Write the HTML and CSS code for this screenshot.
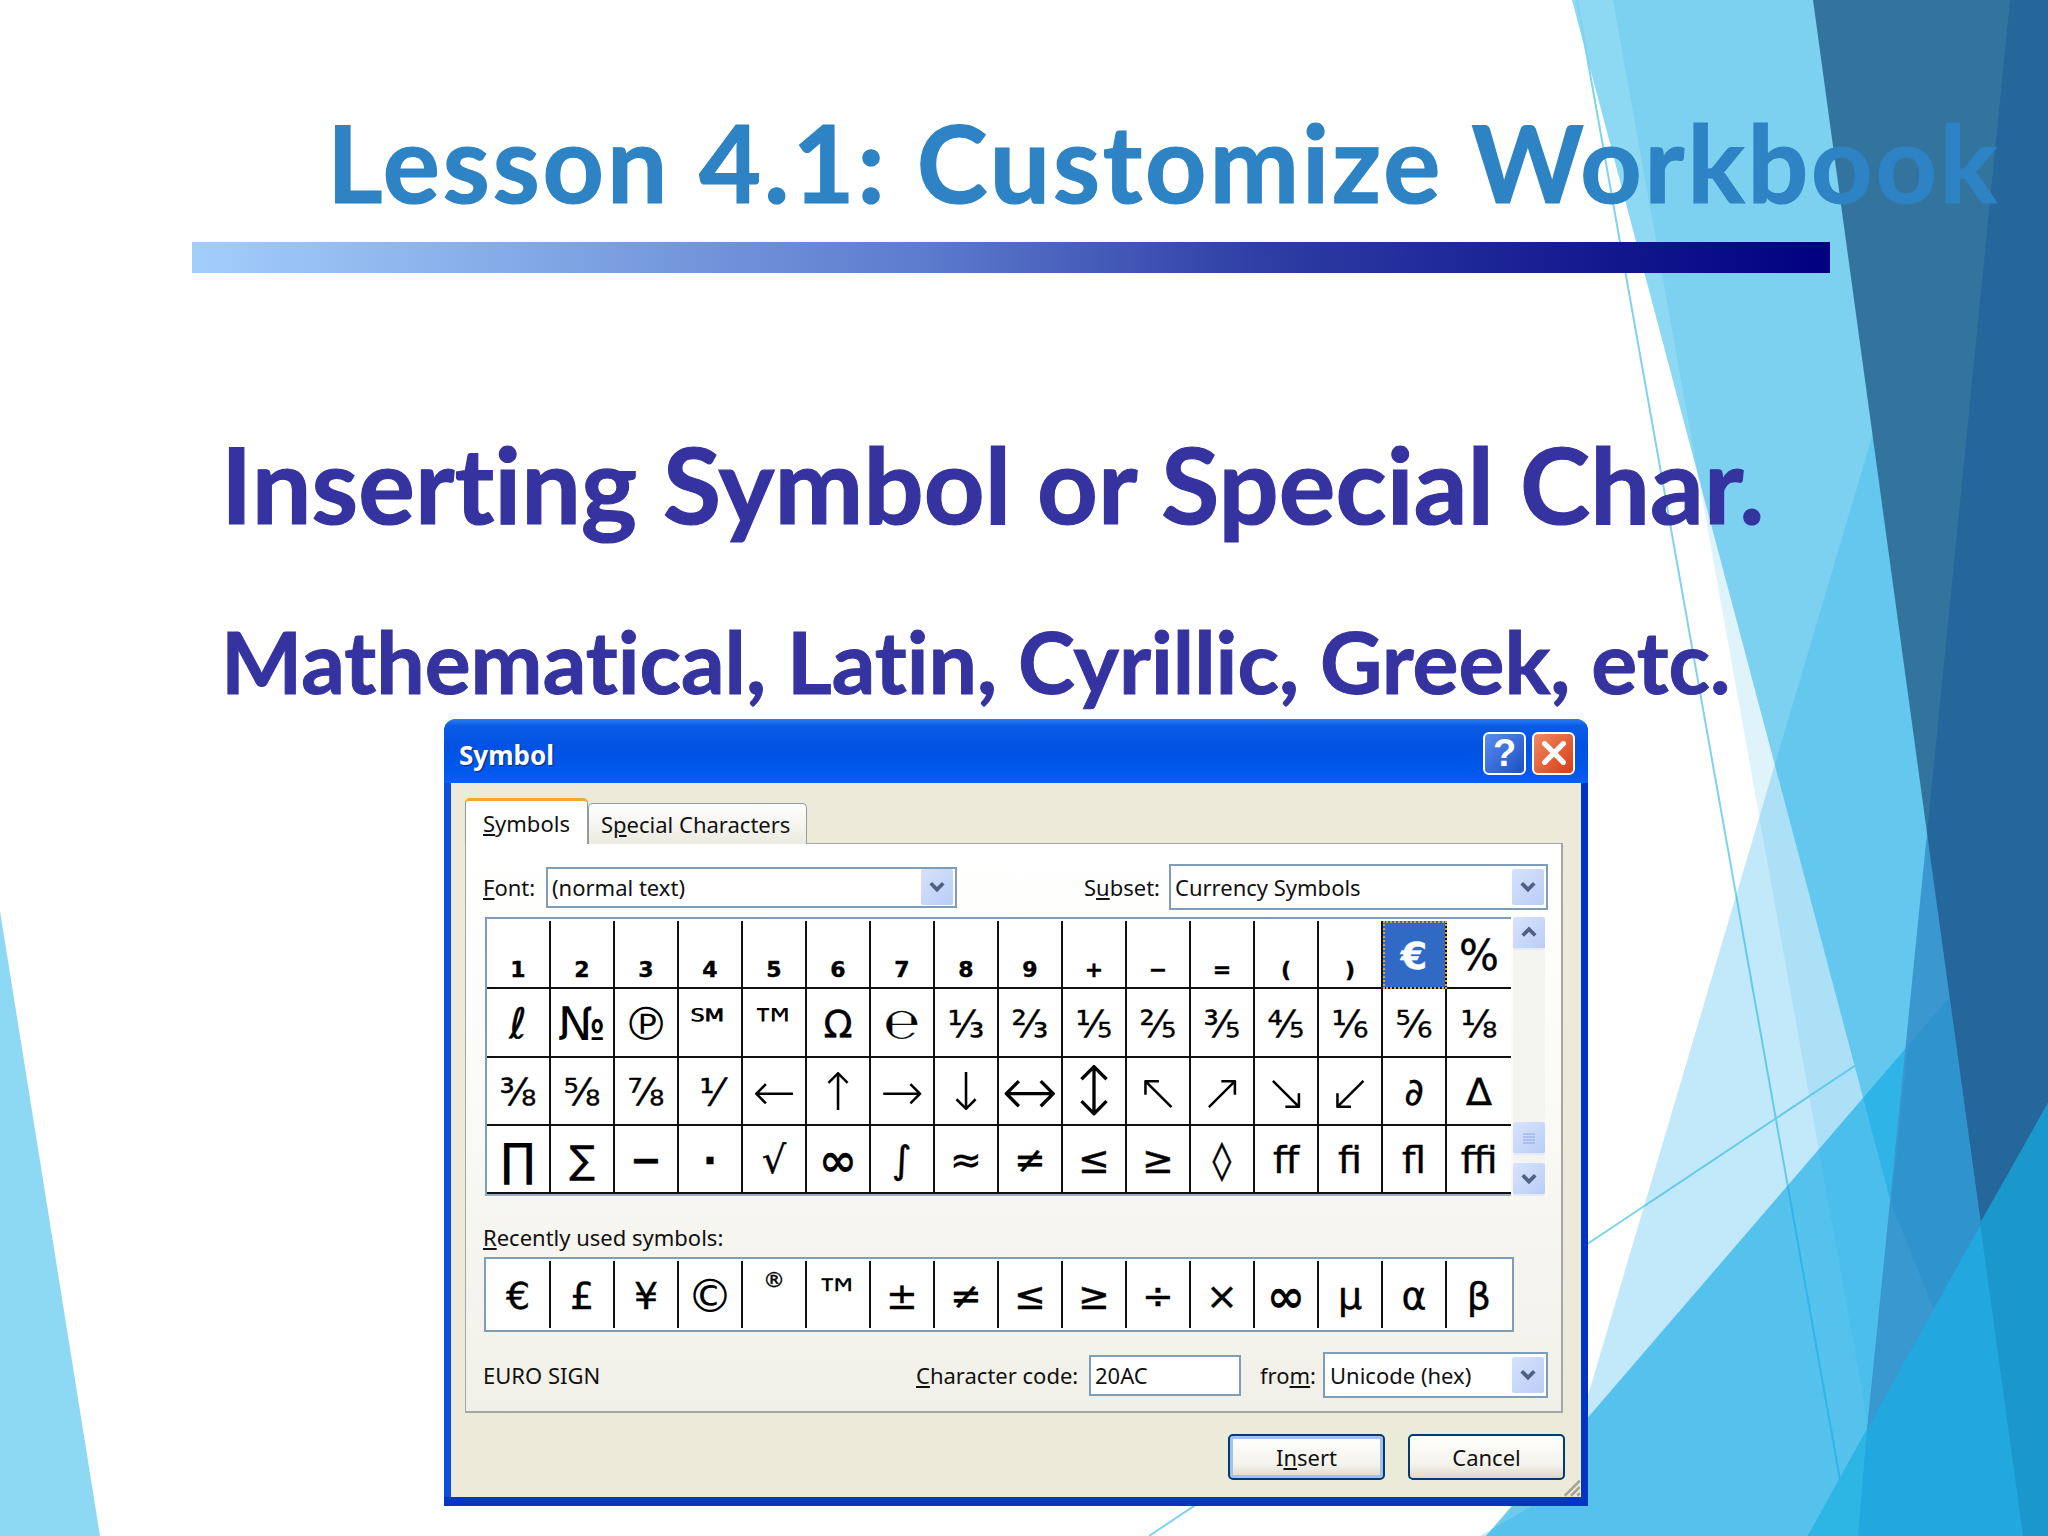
FILE: index.html
```html
<!DOCTYPE html>
<html lang="en">
<head>
<meta charset="utf-8">
<title>Lesson 4.1: Customize Workbook</title>
<link rel="stylesheet" href="styles.css">
</head>
<body>
<div class="slide">
  <svg class="bg" viewBox="0 0 2048 1536" width="2048" height="1536" aria-hidden="true">
    <polygon points="0,911 100,1536 0,1536" fill="#8dd9f3"/>
    <polygon points="1572,0 2048,0 2048,1203 1891,1203" fill="#8dd8f3"/>
    <polygon points="1613,0 2048,0 2048,1536 1888,1536" fill="#1fabe3" fill-opacity="0.143"/>
    <line x1="1577" y1="0" x2="1850" y2="1536" stroke="#7fd3ee" stroke-width="2"/>
    <line x1="1907" y1="1031" x2="1149" y2="1536" stroke="#7fd3ee" stroke-width="2"/>
    <polygon points="1900,342 2048,342 2048,1536 1480,1536 1560,1490" fill="#25b1e9" fill-opacity="0.28"/>
    <polygon points="1949,998 1486,1536 1880,1536" fill="#0ca6e5" fill-opacity="0.6"/>
    <polygon points="1813,0 2020,0 1940,833 1927,833" fill="#33749f"/>
    <polygon points="2010,0 2048,0 2048,1200 1990,1290 1940,1000 1927,833" fill="#25679b"/>
    <polygon points="1927,833 1990,1290 1860,1500" fill="#3a97cf"/>
    <polygon points="1949,998 1990,1290 1860,1500 1908,1046" fill="#2f93ce"/>
    <polygon points="1891,1203 1950,1350 1860,1500" fill="#3a98d0"/>
    <polygon points="2048,1103 2048,1536 1808,1536" fill="#22a8de"/>
    <polygon points="1980,1223 2048,1103 2048,1536 2023,1536" fill="#1a98cc"/>
    <polygon points="1867,1429 1858,1536 1808,1536" fill="#2db5e4"/>
  </svg>

  <h1 class="title">Lesson 4.1: Customize Workbook</h1>
  <div class="rule"></div>
  <h2 class="head">Inserting Symbol or Special Char.</h2>
  <h3 class="sub-head">Mathematical, Latin, Cyrillic, Greek, etc.</h3>

  <div class="dialog">
    <div class="titlebar">
      <span class="dlg-title">Symbol</span>
      <div class="caption-btns">
        <span class="cap-btn help">?</span>
        <span class="cap-btn close">
          <svg viewBox="0 0 24 24" width="28" height="28"><path d="M4 4 L20 20 M20 4 L4 20" stroke="#fff" stroke-width="4.5" stroke-linecap="round" fill="none"/></svg>
        </span>
      </div>
    </div>
    <div class="body">
      <div class="tabs">
        <span class="tab active"><u>S</u>ymbols</span>
        <span class="tab">S<u>p</u>ecial Characters</span>
      </div>
      <div class="panel">
        <div class="font-row">
          <label class="lbl font-lbl"><u>F</u>ont:</label>
          <div class="select font-sel"><span>(normal text)</span>
            <span class="arrow"><svg viewBox="0 0 16 16" width="20" height="20"><path d="M3 5 L8 10 L13 5" class="chev"/></svg></span>
          </div>
          <label class="lbl subset-lbl">S<u>u</u>bset:</label>
          <div class="select subset-sel"><span>Currency Symbols</span>
            <span class="arrow"><svg viewBox="0 0 16 16" width="20" height="20"><path d="M3 5 L8 10 L13 5" class="chev"/></svg></span>
          </div>
        </div>
        <div class="grid-row">
          <div class="grid">
            <span class="c s">1</span><span class="c s">2</span><span class="c s">3</span><span class="c s">4</span><span class="c s">5</span><span class="c s">6</span><span class="c s">7</span><span class="c s">8</span><span class="c s">9</span><span class="c s">+</span><span class="c s">−</span><span class="c s">=</span><span class="c s">(</span><span class="c s">)</span><span class="c sel">€</span><span class="c big">%</span>
            <span class="c big">ℓ</span><span class="c w">№</span><span class="c w">℗</span><span class="c tm">℠</span><span class="c tm">™</span><span class="c">Ω</span><span class="c big">℮</span><span class="c">⅓</span><span class="c">⅔</span><span class="c">⅕</span><span class="c">⅖</span><span class="c">⅗</span><span class="c">⅘</span><span class="c">⅙</span><span class="c">⅚</span><span class="c">⅛</span>
            <span class="c">⅜</span><span class="c">⅝</span><span class="c">⅞</span><span class="c">⅟</span><span class="c ar">←</span><span class="c ar">↑</span><span class="c ar">→</span><span class="c ar">↓</span><span class="c ar2">↔</span><span class="c ar2">↕</span><span class="c ar">↖</span><span class="c ar">↗</span><span class="c ar">↘</span><span class="c ar">↙</span><span class="c">∂</span><span class="c">∆</span>
            <span class="c w">∏</span><span class="c">∑</span><span class="c b">−</span><span class="c b">·</span><span class="c">√</span><span class="c b w">∞</span><span class="c">∫</span><span class="c">≈</span><span class="c">≠</span><span class="c">≤</span><span class="c">≥</span><span class="c">◊</span><span class="c">ﬀ</span><span class="c">ﬁ</span><span class="c">ﬂ</span><span class="c">ﬃ</span>
          </div>
          <div class="scroll">
            <span class="sb-btn"><svg viewBox="0 0 16 16" width="20" height="20"><path d="M3 10 L8 5 L13 10" class="chev"/></svg></span>
            <span class="sb-track"></span>
            <span class="sb-thumb"><svg viewBox="0 0 16 16" width="16" height="16"><path d="M2 4 H14 M2 7 H14 M2 10 H14 M2 13 H14" stroke="#8ea6e8" stroke-width="1.2"/></svg></span>
            <span class="sb-btn"><svg viewBox="0 0 16 16" width="20" height="20"><path d="M3 5 L8 10 L13 5" class="chev"/></svg></span>
          </div>
        </div>
        <div class="lbl recent-lbl"><u>R</u>ecently used symbols:</div>
        <div class="recent">
          <span class="r">€</span><span class="r">£</span><span class="r">¥</span><span class="r w">©</span><span class="r reg">®</span><span class="r tm">™</span><span class="r">±</span><span class="r">≠</span><span class="r">≤</span><span class="r">≥</span><span class="r">÷</span><span class="r">×</span><span class="r b w">∞</span><span class="r">µ</span><span class="r">α</span><span class="r">β</span>
        </div>
        <div class="code-row">
          <span class="lbl euro">EURO SIGN</span>
          <label class="lbl code-lbl"><u>C</u>haracter code:</label>
          <div class="input">20AC</div>
          <label class="lbl from-lbl">fro<u>m</u>:</label>
          <div class="select from-sel"><span>Unicode (hex)</span>
            <span class="arrow"><svg viewBox="0 0 16 16" width="20" height="20"><path d="M3 5 L8 10 L13 5" class="chev"/></svg></span>
          </div>
        </div>
      </div>
      <div class="actions">
        <span class="btn default">I<u>n</u>sert</span>
        <span class="btn">Cancel</span>
      </div>
      <svg class="grip" viewBox="0 0 16 16" width="20" height="20" aria-hidden="true"><path d="M15 3 L3 15 M15 8 L8 15 M15 13 L13 15" stroke="#a8a596" stroke-width="2"/></svg>
    </div>
  </div>
</div>
</body>
</html>
```
FILE: styles.css
```css
* { box-sizing: border-box; }
html, body { margin: 0; padding: 0; background: #fff; }
.slide {
  position: relative;
  width: 2048px;
  height: 1536px;
  overflow: hidden;
  background: #fff;
  font-family: "Lato", "Open Sans", sans-serif;
  font-variant-ligatures: none;
}
.bg { position: absolute; left: 0; top: 0; }
.title, .head, .sub-head, .rule, .dialog { position: relative; }
.title {
  margin: 0 0 0 327px;
  padding-top: 102px;
  font-size: 107px;
  line-height: 120px;
  font-weight: 700;
  letter-spacing: 2.9px;
  -webkit-text-stroke-width: 1.2px;
  color: #2d83c4;
  white-space: nowrap;
}
.rule {
  margin: 20px 0 0 192px;
  width: 1638px;
  height: 31px;
  background: linear-gradient(90deg, #a3cefb 0%, #5c7bcd 45%, #2f3ea5 65%, #000080 100%);
}
.head {
  margin: 150px 0 0 221px;
  font-size: 106px;
  line-height: 120px;
  font-weight: 700;
  letter-spacing: 0.1px;
  -webkit-text-stroke-width: 1.2px;
  color: #35339f;
  white-space: nowrap;
}
.sub-head {
  margin: 68px 0 0 221px;
  font-size: 86px;
  line-height: 100px;
  font-weight: 700;
  -webkit-text-stroke-width: 1px;
  color: #35339f;
  white-space: nowrap;
}

/* dialog */
.dialog {
  position: absolute;
  left: 444px;
  top: 719px;
  width: 1144px;
  height: 787px;
  border-radius: 12px 12px 0 0;
  background: linear-gradient(90deg, #0a52dc 0%, #0a52dc 90%, #0033c4 100%);
  font-family: "Noto Sans", "DejaVu Sans", sans-serif;
  color: #111;
  box-shadow: inset 0 -9px 0 #0036c2;
}
.titlebar {
  height: 64px;
  display: flex;
  align-items: center;
  justify-content: space-between;
  padding: 4px 13px 0 15px;
  border-radius: 12px 12px 0 0;
  background: linear-gradient(180deg, #2a7ff0 0%, #0a5ce6 10%, #0053e2 45%, #0058ee 85%, #0a60f0 100%);
}
.dlg-title {
  padding-top: 4px;
  color: #fff;
  font-size: 26px;
  font-weight: 700;
  text-shadow: 1px 1px 1px #0a2a80;
}
.caption-btns { display: flex; gap: 6px; }
.cap-btn {
  width: 43px;
  height: 43px;
  border: 2px solid #fff;
  border-radius: 6px;
  display: flex;
  align-items: center;
  justify-content: center;
  color: #fff;
  font-size: 38px;
  font-weight: 700;
  line-height: 1;
  font-family: "Liberation Sans", sans-serif;
}
.help { background: linear-gradient(135deg, #5a8cf0, #1c4fc4); }
.close { background: linear-gradient(135deg, #ef8a64, #d83c12); }
.body {
  position: relative;
  margin: 0 7px 0 7px;
  height: 714px;
  background: #ecebd9;
  padding: 15px 0 0 14px;
  font-size: 22px;
}
.tabs { display: flex; align-items: flex-end; height: 46px; }
.tab {
  height: 41px;
  padding: 0 12px;
  width: 219px;
  display: flex;
  align-items: center;
  background: linear-gradient(180deg, #fff, #ecebe0);
  border: 1px solid #919b9c;
  border-bottom: 0;
  border-radius: 5px 5px 0 0;
  white-space: nowrap;
}
.tab.active {
  width: 123px;
  height: 46px;
  padding: 0 0 0 17px;
  background: #fff;
  border-top: 3px solid #f2a832;
  position: relative;
  z-index: 1;
}
.panel {
  width: 1098px;
  height: 570px;
  margin-top: -1px;
  border: 2px solid #a4a7a2;
  border-top-width: 1px;
  border-left-width: 1px;
  background: linear-gradient(180deg, #fff 0%, #fbfbf8 40%, #f1f0e8 100%);
  padding: 20px 0 0 17px;
}
.lbl { white-space: nowrap; }
.font-row { display: flex; align-items: center; height: 46px; }
.font-lbl { width: 63px; }
.select {
  display: flex;
  align-items: center;
  justify-content: space-between;
  background: #fff;
  border: 2px solid #7f9db9;
  padding: 0 2px 0 4px;
}
.font-sel { width: 411px; height: 41px; }
.subset-lbl { margin-left: 127px; width: 85px; }
.subset-sel { width: 379px; height: 46px; }
.arrow {
  width: 32px;
  height: 36px;
  background: linear-gradient(135deg, #d6e2fb, #b9cdf6);
  border-radius: 2px;
  display: flex;
  align-items: center;
  justify-content: center;
}
.chev { fill: none; stroke: #4d6185; stroke-width: 3; }
.grid-row { display: flex; margin-top: 7px; margin-left: 1px; gap: 2px; }
.grid {
  width: 1026px;
  height: 279px;
  margin-left: 1px;
  background: #fff;
  border-left: 2px solid #7f9db9;
  border-top: 2px solid #7f9db9;
  border-bottom: 2px solid #9bb0c6;
  padding-top: 2px;
  display: grid;
  grid-template-columns: repeat(16, 64px);
  grid-template-rows: repeat(4, 1fr);
  color: #000;
}
.c {
  display: flex;
  align-items: center;
  justify-content: center;
  min-width: 0;
  min-height: 0;
  font-family: "DejaVu Sans", sans-serif;
  font-size: 38px;
  line-height: 1;
  padding-top: 3px;
  -webkit-text-stroke-width: 0.4px;
  border-right: 2px solid #111;
  border-bottom: 2px solid #111;
}
.c:nth-child(16n) { border-right: 0; }
.c.s {
  align-items: flex-end;
  padding-top: 0;
  font-size: 22px;
  font-weight: 700;
  padding-bottom: 6px;
}
.c.sel {
  background: #316ac5;
  color: #fff;
  font-weight: 700;
  outline: 2px dotted #d8a530;
  outline-offset: -2px;
}
.c.big { font-size: 42px; }
.c.w, .r.w { font-size: 46px; -webkit-text-stroke-width: 0; }
.c.tm { font-size: 48px; padding-top: 8px; -webkit-text-stroke-width: 0; }
.c.ar, .c.ar2 { font-weight: 200; -webkit-text-stroke-width: 0; }
.c.ar { font-size: 52px; }
.c.ar2 { font-size: 68px; }
.c.b, .r.b { font-weight: 700; }
.scroll {
  width: 32px;
  height: 279px;
  display: flex;
  flex-direction: column;
  background: #f4f4f0;
}
.sb-btn, .sb-thumb {
  height: 33px;
  background: linear-gradient(135deg, #d8e4fb, #b9cdf6);
  border-bottom: 2px solid #e2eafb;
  border-radius: 3px;
  display: flex;
  align-items: center;
  justify-content: center;
}
.sb-track { flex: 1; }
.sb-thumb { margin-bottom: 8px; }
.recent-lbl { margin-top: 26px; height: 30px; line-height: 30px; }
.recent {
  margin: 5px 0 0 1px;
  width: 1030px;
  height: 75px;
  background: #fff;
  border: 2px solid #7f9db9;
  padding: 2px 0 2px 1px;
  display: grid;
  grid-template-columns: repeat(16, 64px);
}
.r {
  display: flex;
  align-items: center;
  justify-content: center;
  font-family: "DejaVu Sans", sans-serif;
  font-size: 38px;
  line-height: 1;
  padding-top: 2px;
  -webkit-text-stroke-width: 0.4px;
  color: #000;
  border-right: 2px solid #111;
}
.r:last-child { border-right: 0; }
.r.reg { font-size: 22px; align-items: flex-start; padding-top: 8px; }
.r.tm { font-size: 46px; -webkit-text-stroke-width: 0; }
.code-row { display: flex; align-items: center; height: 46px; margin-top: 20px; }
.euro { width: 433px; }
.code-lbl { width: 173px; }
.input {
  width: 152px;
  height: 41px;
  border: 2px solid #7f9db9;
  background: #fff;
  padding-left: 4px;
  display: flex;
  align-items: center;
}
.from-lbl { margin-left: 19px; width: 63px; }
.from-sel { width: 225px; height: 46px; padding-left: 5px; }
.actions { display: flex; justify-content: flex-end; gap: 23px; margin-top: 21px; margin-right: 16px; }
.btn {
  width: 157px;
  height: 46px;
  display: flex;
  align-items: center;
  justify-content: center;
  border: 2px solid #003c74;
  border-radius: 5px;
  background: linear-gradient(180deg, #fff 0%, #f3f2ea 70%, #dcd8ca 100%);
}
.btn.default { box-shadow: inset 0 0 0 3px #a5c0ee; }
.grip { position: absolute; right: 0; bottom: 0; }
```
